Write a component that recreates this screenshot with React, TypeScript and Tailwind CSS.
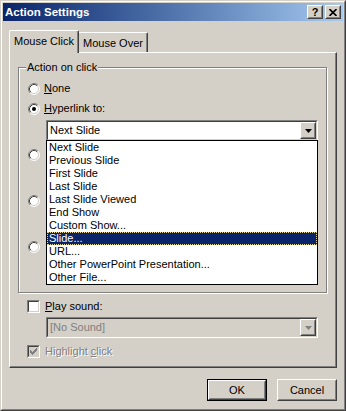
import React from "react";

const raisedOuter =
  "border border-t-white border-l-white border-r-[#404040] border-b-[#404040]";
const raisedInner =
  "border border-t-[#d4d0c8] border-l-[#d4d0c8] border-r-[#808080] border-b-[#808080]";
const sunkenOuter =
  "border border-t-[#808080] border-l-[#808080] border-r-white border-b-white";
const sunkenInner =
  "border border-t-[#404040] border-l-[#404040] border-r-[#d4d0c8] border-b-[#d4d0c8]";

const Radio = ({ checked }: { checked?: boolean }) => (
  <svg width="12" height="12" viewBox="0 0 12 12" className="shrink-0">
    <circle cx="6" cy="6" r="5" fill="#fff" />
    <path d="M2.11 9.89 A5.5 5.5 0 0 1 9.89 2.11" fill="none" stroke="#808080" />
    <path d="M9.89 2.11 A5.5 5.5 0 0 1 2.11 9.89" fill="none" stroke="#fff" />
    <path d="M2.82 9.18 A4.5 4.5 0 0 1 9.18 2.82" fill="none" stroke="#404040" />
    <path d="M9.18 2.82 A4.5 4.5 0 0 1 2.82 9.18" fill="none" stroke="#d4d0c8" />
    {checked && <circle cx="6" cy="6" r="2" fill="#000" />}
  </svg>
);

const Checkbox = ({ checked, disabled }: { checked?: boolean; disabled?: boolean }) => (
  <div className={`w-[13px] h-[13px] shrink-0 ${sunkenOuter}`}>
    <div
      className={`w-full h-full flex items-center justify-center ${sunkenInner} ${
        disabled ? "bg-[#d4d0c8]" : "bg-white"
      }`}
    >
      {checked && (
        <svg width="7" height="7" viewBox="0 0 7 7" shapeRendering="crispEdges">
          <path d="M0 2 L2 4 L7 -1 L7 2 L2 7 L0 5 Z" fill={disabled ? "#808080" : "#000"} />
        </svg>
      )}
    </div>
  </div>
);

const DropButton = ({ disabled }: { disabled?: boolean }) => (
  <div className={`w-[16px] h-full shrink-0 bg-[#d4d0c8] ${raisedOuter}`}>
    <div className={`w-full h-full flex items-center justify-center ${raisedInner}`}>
      <svg width="7" height="4" viewBox="0 0 7 4">
        <polygon points="0,0 7,0 3.5,4" fill={disabled ? "#808080" : "#000"} />
      </svg>
    </div>
  </div>
);

const Combo = ({
  text,
  disabled,
  children,
}: {
  text?: string;
  disabled?: boolean;
  children?: React.ReactNode;
}) => (
  <div className={`relative w-[272px] h-[21px] ${sunkenOuter}`}>
    <div
      className={`w-full h-full flex items-center ${sunkenInner} ${
        disabled ? "bg-[#d4d0c8] text-[#808080]" : "bg-white"
      }`}
    >
      <span className="flex-1 pl-[2px] whitespace-nowrap">{text}</span>
      <DropButton disabled={disabled} />
    </div>
    {children}
  </div>
);

const items = [
  "Next Slide",
  "Previous Slide",
  "First Slide",
  "Last Slide",
  "Last Slide Viewed",
  "End Show",
  "Custom Show...",
  "Slide...",
  "URL...",
  "Other PowerPoint Presentation...",
  "Other File...",
];

const Button = ({ label, primary }: { label: string; primary?: boolean }) => (
  <div
    className={`w-[60px] h-[22px] bg-[#d4d0c8] ${
      primary ? "border border-black" : ""
    }`}
  >
    <div className={`w-full h-full ${raisedOuter}`}>
      <div className={`w-full h-full flex items-center justify-center ${raisedInner}`}>
        {label}
      </div>
    </div>
  </div>
);

export default function App() {
  return (
    <div className="w-[346px] h-[411px] bg-[#d4d0c8] border border-t-[#d4d0c8] border-l-[#d4d0c8] border-r-[#404040] border-b-[#404040] font-['Liberation_Sans',Arial,sans-serif] text-[11px] leading-[13px] text-black">
      <div className="h-full flex flex-col p-px border border-t-white border-l-white border-r-[#808080] border-b-[#808080]">
        {/* title bar */}
        <div className="h-[18px] shrink-0 flex items-center justify-between pl-[2px] pr-[2px] bg-gradient-to-r from-[#0a246a] to-[#a6caf0]">
          <span className="text-white font-bold text-[11.5px]">Action Settings</span>
          <div className="flex gap-[2px]">
            <div className={`w-[16px] h-[14px] bg-[#d4d0c8] ${raisedOuter}`}>
              <div className={`w-full h-full flex items-center justify-center ${raisedInner} font-bold text-[11px] leading-none`}>
                ?
              </div>
            </div>
            <div className={`w-[16px] h-[14px] bg-[#d4d0c8] ${raisedOuter}`}>
              <div className={`w-full h-full flex items-center justify-center ${raisedInner}`}>
                <svg width="8" height="7" viewBox="0 0 8 7">
                  <path d="M0.5 0 L7.5 7 M7.5 0 L0.5 7" stroke="#000" strokeWidth="1.6" />
                </svg>
              </div>
            </div>
          </div>
        </div>

        {/* body */}
        <div className="flex-1 flex flex-col px-[6px] pt-[9px]">
          {/* tabs */}
          <div className="flex items-end">
            <div className="relative z-10 w-[70px] h-[23px] mb-[-1px] bg-[#d4d0c8] border border-b-0 border-t-white border-l-white border-r-[#404040] shadow-[inset_-1px_0_0_#808080] rounded-t-[2px] flex items-center justify-center pb-[2px]">
              Mouse Click
            </div>
            <div className="w-[69px] h-[20px] bg-[#d4d0c8] border border-b-0 border-l-0 border-t-white border-r-[#404040] shadow-[inset_-1px_0_0_#808080] rounded-tr-[2px] flex items-center justify-center pt-[1px]">
              Mouse Over
            </div>
          </div>

          {/* panel */}
          <div className="h-[316px] flex flex-col border border-t-white border-l-white border-r-[#404040] border-b-[#404040] shadow-[inset_-1px_-1px_0_#808080] pl-[8px]">
            <fieldset className="mt-[8px] w-[309px] border border-[#808080] shadow-[inset_1px_1px_0_#fff,1px_1px_0_#fff] pt-[8px] pb-[14px]">
              <legend className="ml-[7px] px-px bg-[#d4d0c8]">Action on click</legend>

              <div className="flex items-center gap-[4px] h-[13px] pl-[9px]">
                <Radio />
                <span>
                  <span className="underline">N</span>one
                </span>
              </div>
              <div className="flex items-center gap-[4px] h-[13px] pl-[9px] mt-[7px]">
                <Radio checked />
                <span>
                  <span className="underline">H</span>yperlink to:
                </span>
              </div>

              <div className="ml-[27px] mt-[5px] relative z-20">
                <Combo text="Next Slide">
                  {/* open dropdown list */}
                  <div className="absolute left-[-1px] top-full w-[272px] border border-black bg-white">
                    {items.map((it) => (
                      <div
                        key={it}
                        className={`h-[13px] pl-[2px] whitespace-nowrap ${
                          it === "Slide..."
                            ? "bg-[#0a246a] text-white outline outline-1 outline-dotted outline-[#e8d8a0] -outline-offset-1"
                            : ""
                        }`}
                      >
                        {it}
                      </div>
                    ))}
                  </div>
                </Combo>
              </div>

              {/* options hidden behind the open list */}
              <div className="flex items-center h-[13px] pl-[9px] mt-[7px]">
                <Radio />
              </div>
              <div className="ml-[27px] mt-[4px] h-[21px]">
                <Combo disabled />
              </div>
              <div className="flex items-center h-[13px] pl-[9px] mt-[8px]">
                <Radio />
              </div>
              <div className="ml-[27px] mt-[4px] h-[21px]">
                <Combo disabled />
              </div>
              <div className="flex items-center h-[13px] pl-[9px] mt-[8px]">
                <Radio />
              </div>
              <div className="ml-[27px] mt-[4px] h-[21px]">
                <Combo disabled />
              </div>
            </fieldset>

            <div className="flex items-center gap-[5px] mt-[7px] pl-[9px]">
              <Checkbox />
              <span>
                <span className="underline">P</span>lay sound:
              </span>
            </div>
            <div className="ml-[28px] mt-[4px]">
              <Combo text="[No Sound]" disabled />
            </div>
            <div className="flex items-center gap-[5px] mt-[7px] pl-[9px] text-[#808080] [text-shadow:1px_1px_0_#fff]">
              <Checkbox checked disabled />
              <span>
                Highlight <span className="underline">c</span>lick
              </span>
            </div>
          </div>

          {/* buttons */}
          <div className="flex justify-end gap-[10px] mt-[11px]">
            <Button label="OK" primary />
            <Button label="Cancel" />
          </div>
        </div>
      </div>
    </div>
  );
}
